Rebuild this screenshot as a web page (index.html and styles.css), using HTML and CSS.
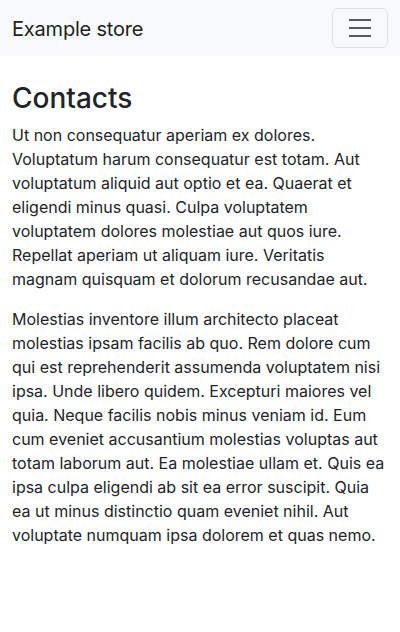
FILE: index.html
```html
<!DOCTYPE html>
<html lang="en">
<head>
<meta charset="utf-8">
<title>Example store</title>
<link rel="stylesheet" href="styles.css">
</head>
<body>
<nav class="navbar">
  <div class="nav-inner">
    <a class="brand" href="#">Example store</a>
    <button class="toggler" type="button" aria-label="Toggle navigation">
      <svg class="toggler-icon" viewBox="0 0 30 30" width="30" height="30" aria-hidden="true">
        <path d="M4 7h22M4 15h22M4 23h22" stroke="rgba(33,37,41,0.75)" stroke-width="2" stroke-linecap="butt" stroke-miterlimit="10" fill="none"/>
      </svg>
    </button>
  </div>
</nav>
<main class="container">
  <h1 class="title">Contacts</h1>
  <p>Ut non consequatur aperiam ex dolores. Voluptatum harum consequatur est totam. Aut voluptatum aliquid aut optio et ea. Quaerat et eligendi minus quasi. Culpa voluptatem voluptatem dolores molestiae aut quos iure. Repellat aperiam ut aliquam iure. Veritatis magnam quisquam et dolorum recusandae aut.</p>
  <p>Molestias inventore illum architecto placeat molestias ipsam facilis ab quo. Rem dolore cum qui est reprehenderit assumenda voluptatem nisi ipsa. Unde libero quidem. Excepturi maiores vel quia. Neque facilis nobis minus veniam id. Eum cum eveniet accusantium molestias voluptas aut totam laborum aut. Ea molestiae ullam et. Quis ea ipsa culpa eligendi ab sit ea error suscipit. Quia ea ut minus distinctio quam eveniet nihil. Aut voluptate numquam ipsa dolorem et quas nemo.</p>
</main>
</body>
</html>
```
FILE: styles.css
```css
* { box-sizing: border-box; }
html, body { margin: 0; padding: 0; }
body {
  font-family: Inter, "Noto Sans", "DejaVu Sans", sans-serif;
  font-size: 16px;
  line-height: 1.5;
  color: #212529;
  background: #fff;
}
.navbar {
  background: #f8f9fa;
  padding: 8px 0;
}
.nav-inner {
  display: flex;
  align-items: center;
  justify-content: space-between;
  padding: 0 12px;
}
.brand {
  font-size: 20px;
  line-height: 30px;
  padding: 6px 0 4px;
  letter-spacing: -0.2px;
  color: rgba(0,0,0,0.9);
  text-decoration: none;
}
.toggler {
  display: flex;
  align-items: center;
  justify-content: center;
  padding: 4px 12px;
  background: transparent;
  border: 1px solid rgba(0,0,0,0.1);
  border-radius: 6px;
  line-height: 1;
}
.toggler-icon { display: block; }
.container {
  padding: 0 12px;
  margin-top: 26px;
}
.title {
  font-size: 28px;
  font-weight: 500;
  line-height: 1.2;
  margin: 0 0 7px;
}
p { margin: 0 0 16px; }
```
